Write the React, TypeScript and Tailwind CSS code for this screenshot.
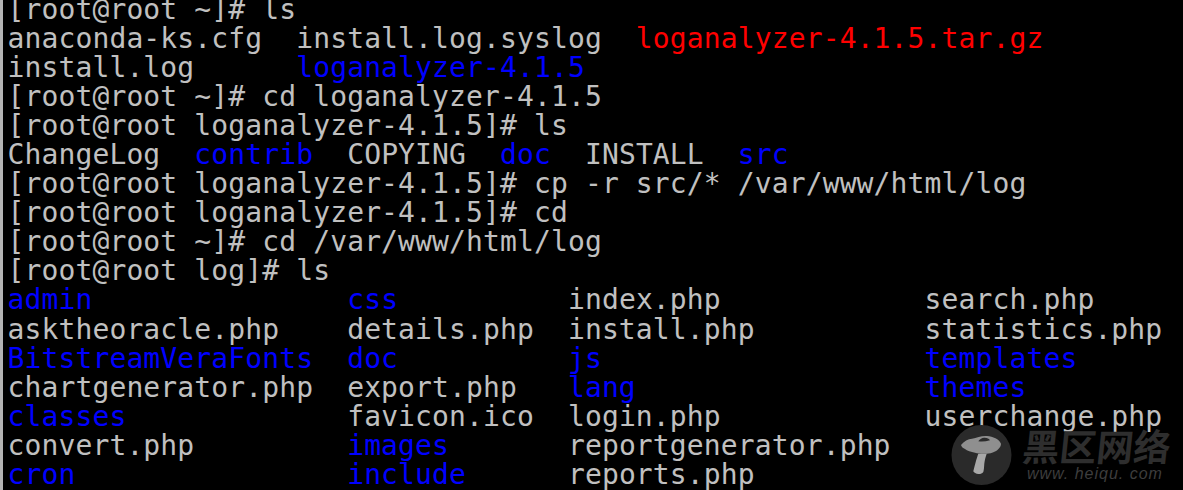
import React from "react";

type Seg = { t: string; c?: "blue" | "red" };

const lines: Seg[][] = [
  [{ t: "[root@root ~]# ls" }],
  [{ t: "anaconda-ks.cfg  install.log.syslog  " }, { t: "loganalyzer-4.1.5.tar.gz", c: "red" }],
  [{ t: "install.log      " }, { t: "loganalyzer-4.1.5", c: "blue" }],
  [{ t: "[root@root ~]# cd loganalyzer-4.1.5" }],
  [{ t: "[root@root loganalyzer-4.1.5]# ls" }],
  [
    { t: "ChangeLog  " },
    { t: "contrib", c: "blue" },
    { t: "  COPYING  " },
    { t: "doc", c: "blue" },
    { t: "  INSTALL  " },
    { t: "src", c: "blue" },
  ],
  [{ t: "[root@root loganalyzer-4.1.5]# cp -r src/* /var/www/html/log" }],
  [{ t: "[root@root loganalyzer-4.1.5]# cd" }],
  [{ t: "[root@root ~]# cd /var/www/html/log" }],
  [{ t: "[root@root log]# ls" }],
  [
    { t: "admin", c: "blue" },
    { t: "               " },
    { t: "css", c: "blue" },
    { t: "          index.php            search.php" },
  ],
  [{ t: "asktheoracle.php    details.php  install.php          statistics.php" }],
  [
    { t: "BitstreamVeraFonts", c: "blue" },
    { t: "  " },
    { t: "doc", c: "blue" },
    { t: "          " },
    { t: "js", c: "blue" },
    { t: "                   " },
    { t: "templates", c: "blue" },
  ],
  [
    { t: "chartgenerator.php  export.php   " },
    { t: "lang", c: "blue" },
    { t: "                 " },
    { t: "themes", c: "blue" },
  ],
  [
    { t: "classes", c: "blue" },
    { t: "             favicon.ico  login.php            userchange.php" },
  ],
  [
    { t: "convert.php         " },
    { t: "images", c: "blue" },
    { t: "       reportgenerator.php" },
  ],
  [
    { t: "cron", c: "blue" },
    { t: "                " },
    { t: "include", c: "blue" },
    { t: "      reports.php" },
  ],
];

const Watermark = () => (
  <div className="absolute left-[951px] top-[425px] flex items-start gap-[11px]">
    <svg width="61" height="61" viewBox="0 0 61 61" className="shrink-0">
      <circle cx="30.5" cy="30" r="30" fill="#2a2a2a" />
      <path
        d="M10 20C13 16 17 14 21 13.7C26 12.5 31 10.5 36 11C42 11.5 48 14 50 18.7C50 22 47 25 44 26.5C41 28 38 28.7 35.7 28.7C31 29 27 28.5 24 27.7C20 27 16 26 14 24C12 23 10.5 22 10 20Z"
        fill="#8f8f8f"
      />
      <path d="M27.3 16.3C29 14 31 12.7 33 12.7C36 12.5 38 13.5 39 15.3C35 16.5 31 16.8 27.3 16.3Z" fill="#2a2a2a" />
      <path
        d="M27.3 28.7L35.7 28.7C34.5 32 33.8 35 33.3 38.7C33 42 33 45 32.3 47C31 48.8 29 49.2 27.3 49C25 48.8 23 47.8 22.3 46.3C23 43 24 40 24.7 37C25.5 34 26.5 31 27.3 28.7Z"
        fill="#a8a8a8"
      />
    </svg>
    <div className="flex flex-col items-start">
      <span className="h-[41px] -skew-x-6 font-['Noto_Sans_CJK_SC',sans-serif] text-[37px] leading-[41px] font-bold text-[#2e2e2e]">
        黑区网络
      </span>
      <span className="ml-[4px] font-['Liberation_Sans',sans-serif] text-[16px] leading-[16px] italic tracking-[1px] whitespace-pre text-[#3d3d3d]">
        www. heiqu. com
      </span>
    </div>
  </div>
);

export default function App() {
  return (
    <div className="relative h-[490px] w-[1183px] overflow-hidden bg-black">
      <div className="flex h-full">
        <div className="w-[3px] shrink-0 bg-[#b4b4b4]" />
        <div className="-mt-[5px] pl-[4.5px] font-['DejaVu_Sans_Mono',monospace] text-[28px] leading-[29.05px] tracking-[0.125px] text-[#c0c0c0]">
          {lines.map((segs, i) => (
            <div key={i} className="h-[29.05px] whitespace-pre">
              {segs.map((s, j) => (
                <span
                  key={j}
                  className={
                    s.c === "blue"
                      ? "text-[#0000ff]"
                      : s.c === "red"
                        ? "text-[#ff0000]"
                        : undefined
                  }
                >
                  {s.t}
                </span>
              ))}
            </div>
          ))}
        </div>
      </div>
      <Watermark />
    </div>
  );
}
